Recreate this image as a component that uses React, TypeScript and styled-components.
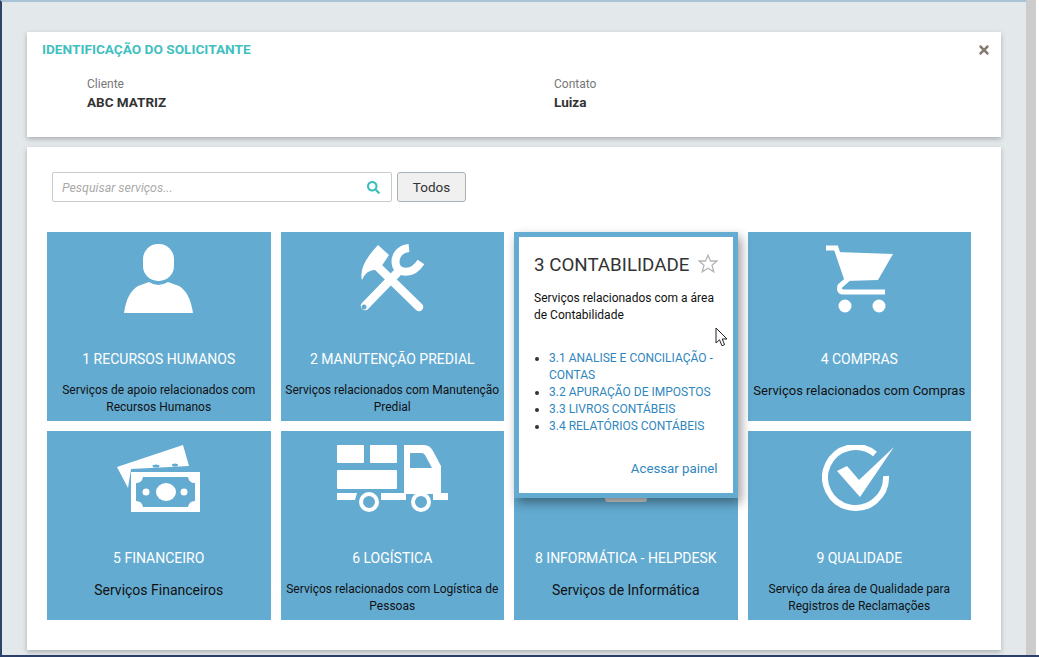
import React from 'react';
import styled, { createGlobalStyle } from 'styled-components';
import { FaSearch, FaTimes } from 'react-icons/fa';

const TILE_BLUE = '#64abd1';

const PersonIcon = () => (
  <svg width="69" height="69" viewBox="0 0 69 69" fill="#fff">
    <rect x="19" y="0" width="31" height="37" rx="15" />
    <path d="M0 69C2 55 7 46 14 42L25 38Q34 44 44 38L55 42C62 46 67 55 69 69Z" />
  </svg>
);

const ToolsIcon = () => (
  <svg width="66" height="69" viewBox="0 0 66 69" fill="none">
    <path d="M19 1L30 11L20 26Q8 24 3 36Q-1 22 19 1Z" fill="#fff" />
    <path d="M17 21L60 63" stroke="#fff" strokeWidth="8.5" strokeLinecap="round" />
    <path d="M6 62L38 29" stroke="#fff" strokeWidth="8.5" strokeLinecap="round" />
    <path d="M50 4C40 5 35 13 37 21C39 29 53 32 62 18" stroke="#fff" strokeWidth="8" />
    <circle cx="5" cy="63" r="2.5" fill={TILE_BLUE} />
  </svg>
);

const CartIcon = () => (
  <svg width="68" height="69" viewBox="0 0 68 69" fill="none">
    <path d="M11 8L68 10L53 36L21 37Z" fill="#fff" />
    <path d="M1 4H11L22 36L15 42Q13 48 19 48H60" stroke="#fff" strokeWidth="5" />
    <circle cx="20" cy="62" r="6.5" fill="#fff" />
    <circle cx="54" cy="62" r="6.5" fill="#fff" />
  </svg>
);

const MoneyIcon = () => (
  <svg width="83" height="67" viewBox="0 0 83 67">
    <path d="M0 22L66 0L72 21L14 24L11 43Z" fill="#fff" />
    <ellipse cx="39" cy="21" rx="3.5" ry="1.5" fill={TILE_BLUE} />
    <ellipse cx="58" cy="20" rx="3" ry="1.5" fill={TILE_BLUE} />
    <path
      fill="#fff"
      fillRule="evenodd"
      d="M14 27H83V67H14ZM19 38V56Q25 56 26 62H71Q72 56 78 56V38Q72 38 71 32H26Q25 38 19 38Z"
    />
    <ellipse cx="49" cy="47" rx="10" ry="9" fill="#fff" />
    <circle cx="29" cy="47" r="3.5" fill="#fff" />
    <circle cx="67" cy="47" r="3.5" fill="#fff" />
  </svg>
);

const TruckIcon = () => (
  <svg width="112" height="68" viewBox="0 0 112 68" fill="#fff">
    <rect x="1" y="1" width="27" height="18" rx="1" />
    <rect x="34" y="1" width="27" height="18" rx="1" />
    <rect x="1" y="26" width="60" height="19" rx="1" />
    <path
      fillRule="evenodd"
      d="M68 1H88Q94 1 97 7L105 22V50H68ZM74 9V24H96L89 11Q88 9 85 9Z"
    />
    <path d="M1 49H21L19 56H1ZM45 49H70V56H45ZM97 49H112V56H97Z" />
    <circle cx="33" cy="58" r="8" fill="none" stroke="#fff" strokeWidth="4" />
    <circle cx="85" cy="58" r="8" fill="none" stroke="#fff" strokeWidth="4" />
  </svg>
);

// the popup covers all of the laptop but its base
const LaptopIcon = () => (
  <svg width="80" height="81" viewBox="0 0 80 81">
    <rect x="8" y="5" width="64" height="60" fill="#fff" />
    <path d="M19 66H61V68Q61 71 58 71H22Q19 71 19 68Z" fill="#d8d8d8" />
  </svg>
);

const CheckIcon = () => (
  <svg width="74" height="67" viewBox="0 0 74 67" fill="none">
    <path d="M53 9A30.5 30.5 0 1 0 64 31" stroke="#fff" strokeWidth="6" />
    <path d="M15 26L25 21L37 35L72 2L38 52Z" fill="#fff" />
  </svg>
);

const StarIcon = () => (
  <svg width="20" height="19" viewBox="0 0 20 19" fill="none">
    <path
      d="M10 1.2L12.6 7H19L14 11.2L15.8 17.8L10 14.2L4.2 17.8L6 11.2L1 7H7.4Z"
      stroke="#b5b5b5"
      strokeWidth="1.3"
    />
  </svg>
);

const services = [
  { id: 1, title: '1 RECURSOS HUMANOS', text: 'Serviços de apoio relacionados com Recursos Humanos', size: 12, icon: <PersonIcon /> },
  { id: 2, title: '2 MANUTENÇÃO PREDIAL', text: 'Serviços relacionados com Manutenção Predial', size: 12, icon: <ToolsIcon /> },
  { id: 3, title: '3 CONTABILIDADE', text: 'Serviços relacionados com a área de Contabilidade', size: 12, icon: null },
  { id: 4, title: '4 COMPRAS', text: 'Serviços relacionados com Compras', size: 13, icon: <CartIcon /> },
  { id: 5, title: '5 FINANCEIRO', text: 'Serviços Financeiros', size: 14, icon: <MoneyIcon /> },
  { id: 6, title: '6 LOGÍSTICA', text: 'Serviços relacionados com Logística de Pessoas', size: 12, icon: <TruckIcon /> },
  { id: 8, title: '8 INFORMÁTICA - HELPDESK', text: 'Serviços de Informática', size: 14, icon: <LaptopIcon /> },
  { id: 9, title: '9 QUALIDADE', text: 'Serviço da área de Qualidade para Registros de Reclamações', size: 12, icon: <CheckIcon /> },
];

const links = [
  '3.1 ANALISE E CONCILIAÇÃO - CONTAS',
  '3.2 APURAÇÃO DE IMPOSTOS',
  '3.3 LIVROS CONTÁBEIS',
  '3.4 RELATÓRIOS CONTÁBEIS',
];

const App = () => {
  return (
    <>
      <GlobalStyle />
      <Frame>
        <Main>
          <HeaderCard>
            <CardTitle>IDENTIFICAÇÃO DO SOLICITANTE</CardTitle>
            <CloseButton>
              <FaTimes size={14} />
            </CloseButton>
            <Fields>
              <Field>
                <FieldLabel>Cliente</FieldLabel>
                <FieldValue>ABC MATRIZ</FieldValue>
              </Field>
              <Field>
                <FieldLabel>Contato</FieldLabel>
                <FieldValue>Luiza</FieldValue>
              </Field>
            </Fields>
          </HeaderCard>
          <ServicesCard>
            <SearchRow>
              <SearchBox>
                <SearchInput placeholder="Pesquisar serviços..." />
                <FaSearch size={13} color="#3cbdb9" />
              </SearchBox>
              <AllButton>Todos</AllButton>
            </SearchRow>
            <Grid>
              {services.map((service) =>
                service.id === 3 ? (
                  <Tile key={service.id}>
                    <Popup>
                      <PopupHead>
                        <PopupTitle>{service.title}</PopupTitle>
                        <StarIcon />
                      </PopupHead>
                      <PopupText>{service.text}</PopupText>
                      <LinkList>
                        {links.map((link) => (
                          <li key={link}>
                            <ServiceLink>{link}</ServiceLink>
                          </li>
                        ))}
                      </LinkList>
                      <PanelLink>Acessar painel</PanelLink>
                      <Cursor width="13" height="20" viewBox="0 0 13 20">
                        <path
                          d="M1 1V16L4.5 12.8L7 18.8L9.6 17.6L7.2 12H12Z"
                          fill="#fff"
                          stroke="#222"
                          strokeWidth="1"
                        />
                      </Cursor>
                    </Popup>
                  </Tile>
                ) : (
                  <Tile key={service.id}>
                    <IconSlot>{service.icon}</IconSlot>
                    <TileTitle>{service.title}</TileTitle>
                    <TileText $size={service.size}>{service.text}</TileText>
                  </Tile>
                ),
              )}
            </Grid>
          </ServicesCard>
        </Main>
        <ScrollStrip />
      </Frame>
    </>
  );
};

export default App;

const GlobalStyle = createGlobalStyle`
  html, body {
    margin: 0;
    height: 100%;
    overflow: hidden;
    background: #fff;
  }
  * {
    box-sizing: border-box;
  }
  body {
    font-family: Roboto, "Liberation Sans", sans-serif;
  }
`;

const Frame = styled.div`
  display: flex;
  height: 657px;
  width: 1039px;
  padding-right: 3px;
  border-bottom: 2px solid #2b3f68;
  background: #fff;
`;

const Main = styled.main`
  width: 1026px;
  display: flex;
  flex-direction: column;
  gap: 10px;
  padding: 30px 25px 0;
  background: #e3e8eb;
  border-top: 2px solid #a9c3d6;
  border-left: 2px solid #2b4468;
`;

const ScrollStrip = styled.div`
  flex: 1;
  background: #cccccc;
`;

const HeaderCard = styled.section`
  position: relative;
  height: 105px;
  padding: 10px 15px;
  background: #fff;
  box-shadow: 0 2px 5px rgba(0, 0, 0, 0.25);
`;

const CardTitle = styled.h2`
  margin: 0;
  font-size: 13.65px;
  line-height: 15px;
  font-weight: 700;
  color: #3fc0c0;
`;

const CloseButton = styled.span`
  position: absolute;
  top: 10px;
  right: 10px;
  color: #837a6e;
`;

const Fields = styled.div`
  display: grid;
  grid-template-columns: 467px 1fr;
  margin-top: 20px;
  padding-left: 45px;
`;

const Field = styled.div`
  display: flex;
  flex-direction: column;
  gap: 3px;
`;

const FieldLabel = styled.span`
  font-size: 12px;
  line-height: 15px;
  color: #777;
`;

const FieldValue = styled.strong`
  font-size: 13.5px;
  line-height: 15px;
  font-weight: 700;
  color: #333;
`;

const ServicesCard = styled.section`
  height: 503px;
  padding: 25px 30px 0 20px;
  background: #fff;
  box-shadow: 0 2px 5px rgba(0, 0, 0, 0.25);
`;

const SearchRow = styled.div`
  display: flex;
  gap: 5px;
  margin: 0 0 30px 5px;
`;

const SearchBox = styled.div`
  display: flex;
  align-items: center;
  width: 340px;
  height: 30px;
  padding: 0 11px 0 9px;
  background: #fff;
  border: 1px solid #c8cbce;
  border-radius: 2px;
`;

const SearchInput = styled.input`
  flex: 1;
  min-width: 0;
  padding: 0;
  border: none;
  outline: none;
  font-family: inherit;
  font-size: 12.4px;
  font-style: italic;

  &::placeholder {
    color: #aaa;
    opacity: 1;
  }
`;

const AllButton = styled.button`
  width: 69px;
  height: 30px;
  padding: 0;
  font-family: inherit;
  font-size: 13.5px;
  color: #333;
  background: #f0f0f0;
  border: 1px solid #a9b1b8;
  border-radius: 3px;
`;

const Grid = styled.div`
  display: grid;
  grid-template-columns: repeat(4, 1fr);
  grid-auto-rows: 189px;
  gap: 10px;
`;

const Tile = styled.article`
  position: relative;
  display: flex;
  flex-direction: column;
  align-items: center;
  padding: 0 3px;
  text-align: center;
  background: ${TILE_BLUE};
`;

const IconSlot = styled.div`
  display: flex;
  justify-content: center;
  align-items: flex-end;
  height: 81px;
  flex-shrink: 0;
`;

const TileTitle = styled.h3`
  margin: 37px 0 0;
  font-size: 14px;
  line-height: 18px;
  font-weight: 400;
  color: #fff;
`;

const TileText = styled.p<{ $size: number }>`
  margin: ${(props) => (props.$size >= 14 ? 15 : 14)}px 0 0;
  font-size: ${(props) => props.$size}px;
  line-height: 17px;
  color: #111;
`;

const Popup = styled.div`
  position: absolute;
  z-index: 2;
  top: 0;
  left: 0;
  right: 0;
  height: 266px;
  display: flex;
  flex-direction: column;
  padding: 15px 15px 0;
  text-align: left;
  background: #fff;
  border: 5px solid ${TILE_BLUE};
  box-shadow: 3px 5px 10px rgba(0, 0, 0, 0.4);
`;

const PopupHead = styled.div`
  display: flex;
  align-items: center;
  justify-content: space-between;
  height: 26px;

  svg {
    margin-top: -4px;
  }
`;

const PopupTitle = styled.h3`
  margin: 0;
  font-size: 18.75px;
  line-height: 26px;
  font-weight: 400;
  color: #333;
`;

const PopupText = styled.p`
  margin: 12px 0 0;
  font-size: 12px;
  line-height: 17px;
  color: #111;
`;

const LinkList = styled.ul`
  margin: 25.5px 0 0;
  padding-left: 15px;
  font-size: 12px;
  line-height: 17px;
  color: #333;
`;

const ServiceLink = styled.a`
  color: #2f86bd;
`;

const PanelLink = styled.a`
  align-self: flex-end;
  margin-top: 25px;
  font-size: 13.25px;
  line-height: 17px;
  color: #2f86bd;
`;

const Cursor = styled.svg`
  position: absolute;
  top: 90px;
  left: 196px;
`;
